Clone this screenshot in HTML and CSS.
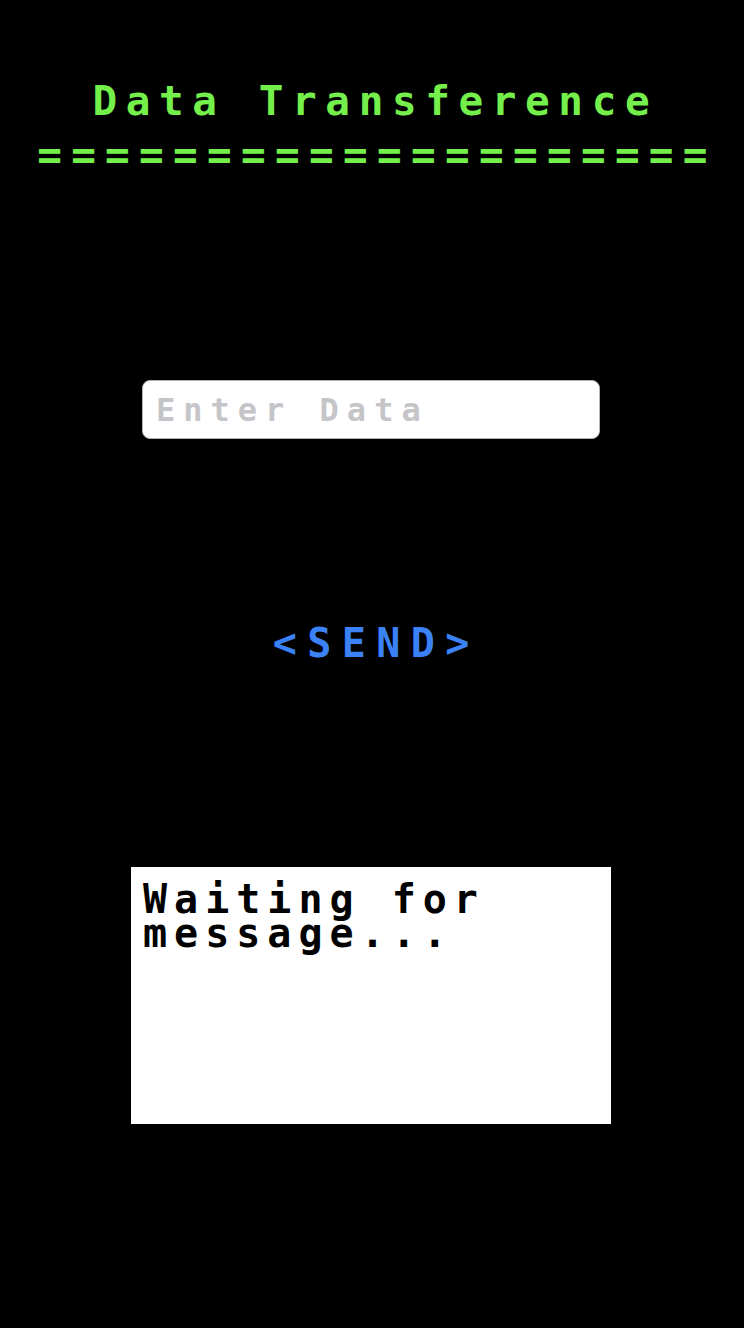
FILE: index.html
```html
<!DOCTYPE html>
<html lang="en">
<head>
<meta charset="utf-8">
<title>Data Transference</title>
<link rel="stylesheet" href="styles.css">
</head>
<body>
<main class="page">
  <h1 class="title">Data Transference</h1>
  <div class="rule">====================</div>
  <input class="data-input" type="text" placeholder="Enter Data">
  <button class="send" type="button">&lt;SEND&gt;</button>
  <div class="message">Waiting for message...</div>
</main>
</body>
</html>
```
FILE: styles.css
```css
html, body {
  margin: 0;
  padding: 0;
  background: #000;
}

body {
  width: 744px;
  min-height: 1328px;
  font-family: "DejaVu Sans Mono", "Liberation Mono", monospace;
  font-weight: bold;
}

.page {
  display: flex;
  flex-direction: column;
  align-items: center;
  padding-top: 81px;
  padding-right: 2px;
}

.title {
  margin: 0;
  font-size: 41px;
  line-height: 41px;
  font-weight: bold;
  color: #74ef4c;
  letter-spacing: 8.6px;
  padding-left: 8.6px;
  white-space: nowrap;
}

.rule {
  margin-top: 13px;
  font-size: 41px;
  line-height: 41px;
  color: #74ef4c;
  letter-spacing: 9.3px;
  padding-left: 12px;
  white-space: nowrap;
}

.data-input {
  box-sizing: border-box;
  margin-top: 204px;
  width: 458px;
  height: 59px;
  padding: 0 10px 0 13px;
  border: 1px solid #b4b4b8;
  border-radius: 8px;
  background: #fff;
  font-family: "DejaVu Sans Mono", "Liberation Mono", monospace;
  font-weight: bold;
  font-size: 32px;
  letter-spacing: 8px;
  color: #000;
  outline: none;
}

.data-input::placeholder {
  color: #c5c5c9;
  opacity: 1;
}

.send {
  margin-top: 184px;
  padding: 0 0 0 10.4px;
  border: 0;
  background: none;
  font-family: "DejaVu Sans Mono", "Liberation Mono", monospace;
  font-weight: bold;
  font-size: 40px;
  line-height: 40px;
  letter-spacing: 10.4px;
  color: #3b82f6;
  cursor: pointer;
}

.message {
  box-sizing: border-box;
  margin-top: 204px;
  width: 480px;
  height: 257px;
  padding: 15px 12px 12px 12px;
  background: #fff;
  color: #000;
  font-size: 40px;
  line-height: 34px;
  letter-spacing: 7px;
}
```
